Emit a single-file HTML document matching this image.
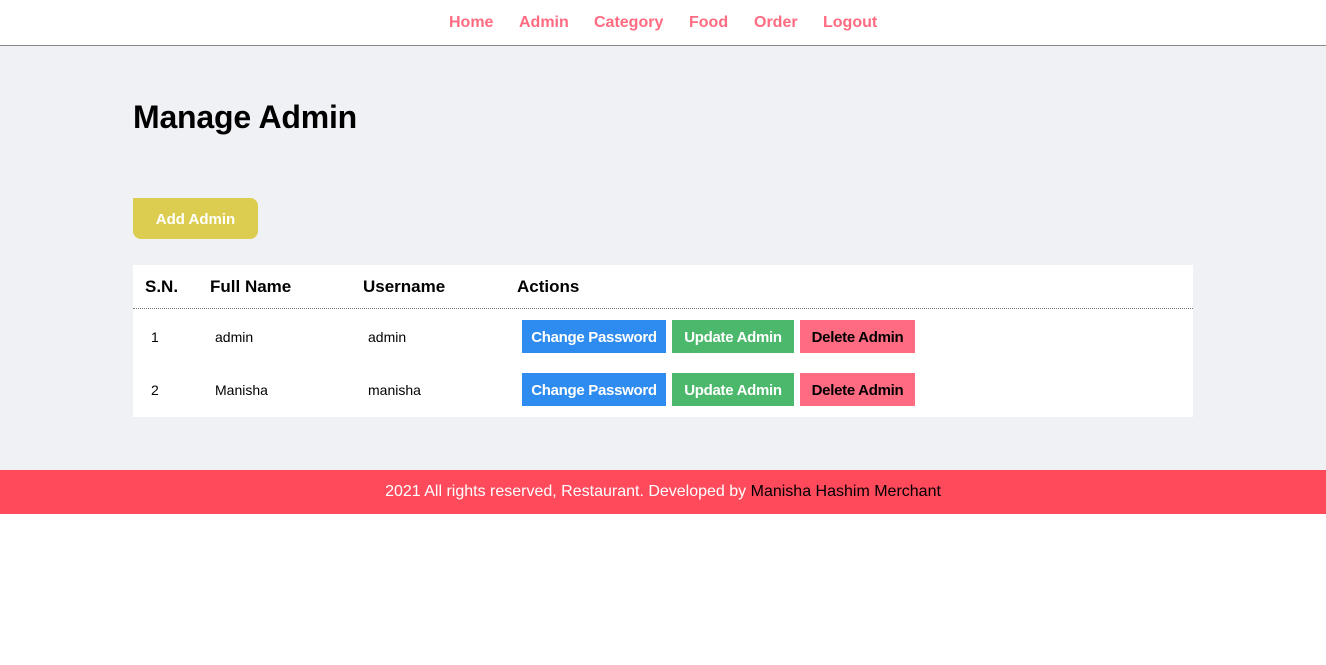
<!DOCTYPE html>
<html><head><style>
*{margin:0;padding:0;box-sizing:border-box}
body{width:1326px;height:665px;background:#fff;font-family:"Liberation Sans",Arial,sans-serif;position:relative;overflow:hidden}
.nav{position:absolute;left:0;top:0;width:1326px;height:46px;border-bottom:1px solid #888;background:#fff}
.nav a{position:absolute;top:14px;color:#ff6b81;font-weight:bold;font-size:16px;text-decoration:none}
.main{position:absolute;top:46px;left:0;width:1326px;height:424px;background:#f0f1f5}
h1{position:absolute;left:133px;top:99px;font-size:32px;font-weight:bold;color:#000;letter-spacing:-0.2px}
.add{position:absolute;left:133px;top:198px;width:125px;height:41px;background:#dccd50;border-radius:0 8px 8px 8px;color:#fff;font-weight:bold;font-size:15px;line-height:43px;text-align:center}
.tbl{position:absolute;left:133px;top:265px;width:1060px;height:152px;background:#fff}
.hr{position:absolute;left:0;top:43px;width:1060px;border-top:1px dotted #777}
.t{position:absolute;font-size:14px;color:#000}
.th{position:absolute;font-size:17px;font-weight:bold;color:#000;top:12px}
.b{position:absolute;height:33px;line-height:35px;text-align:center;font-weight:bold;font-size:15px;letter-spacing:-0.3px}
.cp{background:#2e8bef;color:#fff;width:144px;left:389px}
.up{background:#4cb86c;color:#fff;width:122px;left:539px}
.dl{background:#ff6b81;color:#000;width:115px;left:667px}
.foot{position:absolute;left:0;top:470px;width:1326px;height:44px;background:#ff4a5c;color:#fff;font-size:16px;line-height:44px;text-align:center}
</style></head><body>
<div class="nav">
<a style="left:449px">Home</a><a style="left:519px">Admin</a><a style="left:594px">Category</a><a style="left:689px">Food</a><a style="left:754px">Order</a><a style="left:823px">Logout</a>
</div>
<div class="main"></div>
<h1>Manage Admin</h1>
<div class="add">Add Admin</div>
<div class="tbl">
<div class="th" style="left:12px">S.N.</div>
<div class="th" style="left:77px">Full Name</div>
<div class="th" style="left:230px">Username</div>
<div class="th" style="left:384px">Actions</div>
<div class="hr"></div>
<div class="t" style="left:18px;top:64px">1</div>
<div class="t" style="left:82px;top:64px">admin</div>
<div class="t" style="left:235px;top:64px">admin</div>
<div class="b cp" style="top:55px">Change Password</div>
<div class="b up" style="top:55px">Update Admin</div>
<div class="b dl" style="top:55px">Delete Admin</div>
<div class="t" style="left:18px;top:117px">2</div>
<div class="t" style="left:82px;top:117px">Manisha</div>
<div class="t" style="left:235px;top:117px">manisha</div>
<div class="b cp" style="top:108px">Change Password</div>
<div class="b up" style="top:108px">Update Admin</div>
<div class="b dl" style="top:108px">Delete Admin</div>
</div>
<div class="foot">2021 All rights reserved, Restaurant. Developed by <span style="color:#000">Manisha Hashim Merchant</span></div>
</body></html>
